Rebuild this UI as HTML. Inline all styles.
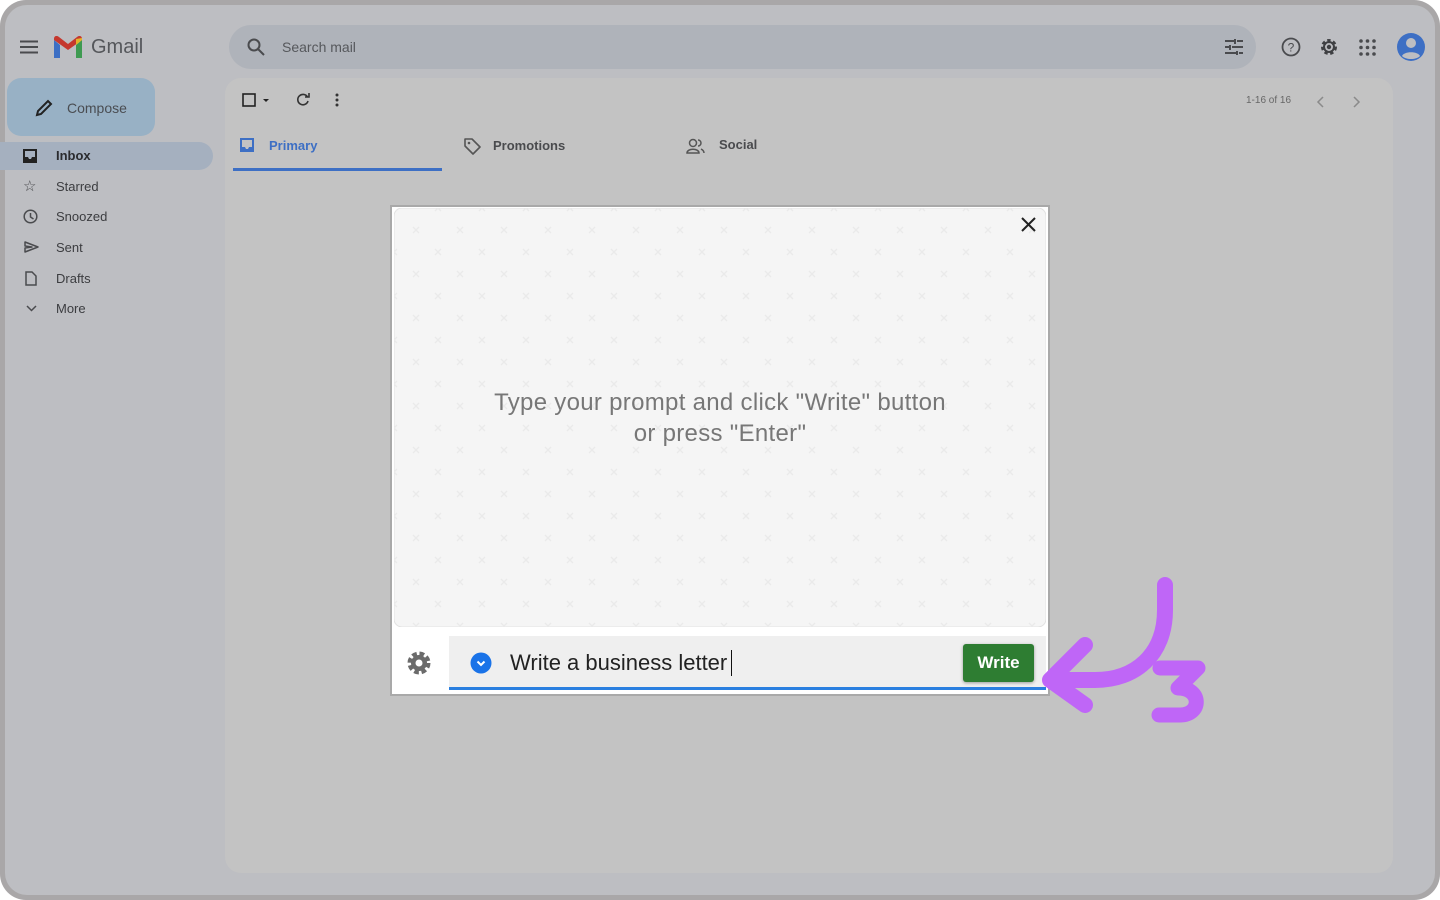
<!DOCTYPE html>
<html><head><style>
*{margin:0;padding:0;box-sizing:border-box}
body{width:1440px;height:900px;overflow:hidden;background:#fff;font-family:"Liberation Sans",Arial,sans-serif;position:relative}
.frame{position:absolute;left:0;top:0;width:1440px;height:900px;background:#a9a7a8;border-radius:26px}
.in{position:absolute;left:5px;top:5px;width:1430px;height:890px;background:#bdbec2;border-radius:22px;overflow:hidden}
.abs{position:absolute}
.t{position:absolute;font-size:13px;color:#3c3d40;white-space:nowrap}
</style></head><body>
<div class="frame"></div>
<div class="in"></div>
<!-- header -->
<svg class="abs" style="left:20px;top:40px" width="18" height="14"><path d="M0 1.5h18M0 7h18M0 12.5h18" stroke="#4a4b4e" stroke-width="2"/></svg>
<svg class="abs" style="left:54px;top:36px" width="28" height="22" viewBox="0 0 28 22">
<path d="M0 4v18h6V9z" fill="#3d6fc4"/><path d="M22 9v13h6V4z" fill="#3e9a51"/>
<path d="M0 4l14 10 14-10v-1.5C28 0 25 -1 23 1L14 8 5 1C3 -1 0 0 0 2.5z" fill="#c5382e"/>
<path d="M22 3l6-1v2l-6 5z" fill="#e2b32b"/></svg>
<div class="t" style="left:91px;top:36px;font-size:20px;color:#55575b">Gmail</div>
<div class="abs" style="left:229px;top:25px;width:1027px;height:44px;background:#afb3ba;border-radius:22px"></div>
<svg class="abs" style="left:247px;top:38px" width="18" height="18"><circle cx="7" cy="7" r="5.5" fill="none" stroke="#4a4b4e" stroke-width="2"/><path d="M11 11l6 6" stroke="#4a4b4e" stroke-width="2"/></svg>
<div class="t" style="left:282px;top:39px;font-size:14px;color:#56585c">Search mail</div>
<svg class="abs" style="left:1225px;top:39px" width="18" height="16"><path d="M0 2h9M12 2h6M0 8h4M7 8h11M0 14h11M14 14h4M10 0v5M5 6v5M12 12v4" stroke="#4a4b4e" stroke-width="2"/></svg>
<svg class="abs" style="left:1281px;top:37px" width="20" height="20"><circle cx="10" cy="10" r="8.5" fill="none" stroke="#4a4b4e" stroke-width="1.8"/><text x="10" y="14.5" font-size="12" text-anchor="middle" fill="#4a4b4e" font-family="Liberation Sans">?</text></svg>
<svg class="abs" style="left:1319px;top:37px" width="20" height="20" viewBox="0 0 20 20"><circle cx="10" cy="10" r="6" fill="none" stroke="#3f4043" stroke-width="4" stroke-dasharray="3 2.3"/><circle cx="10" cy="10" r="5" fill="none" stroke="#3f4043" stroke-width="2"/><circle cx="10" cy="10" r="2.2" fill="#3f4043"/></svg>
<svg class="abs" style="left:1359px;top:39px" width="17" height="17"><g fill="#4a4b4e"><circle cx="2" cy="2" r="1.8"/><circle cx="8.5" cy="2" r="1.8"/><circle cx="15" cy="2" r="1.8"/><circle cx="2" cy="8.5" r="1.8"/><circle cx="8.5" cy="8.5" r="1.8"/><circle cx="15" cy="8.5" r="1.8"/><circle cx="2" cy="15" r="1.8"/><circle cx="8.5" cy="15" r="1.8"/><circle cx="15" cy="15" r="1.8"/></g></svg>
<svg class="abs" style="left:1397px;top:33px" width="28" height="28"><circle cx="14" cy="14" r="14" fill="#3d6fc4"/><circle cx="14" cy="10" r="5" fill="#bdbec2"/><path d="M5 23c2-5 16-5 18 0c-4 4-14 4-18 0z" fill="#bdbec2"/></svg>
<!-- sidebar -->
<div class="abs" style="left:7px;top:78px;width:148px;height:58px;background:#98b1c5;border-radius:14px"></div>
<svg class="abs" style="left:35px;top:99px" width="18" height="18"><path d="M2 16l1-4 10-10 3 3-10 10z" fill="none" stroke="#222" stroke-width="2"/></svg>
<div class="t" style="left:67px;top:100px;font-size:14px;color:#4a4d52">Compose</div>
<div class="abs" style="left:0;top:142px;width:213px;height:28px;background:#a5b0bf;border-radius:0 14px 14px 0"></div>
<svg class="abs" style="left:23px;top:149px" width="14" height="14"><rect x="1" y="1" width="12" height="12" fill="none" stroke="#222" stroke-width="2"/><path d="M1 8h4l1 2h2l1-2h4v5H1z" fill="#222"/></svg>
<div class="t" style="left:56px;top:148px;font-weight:bold;color:#2a2b2e">Inbox</div>
<div class="t" style="left:23px;top:177px;font-size:15px;color:#4a4b4e">☆</div>
<div class="t" style="left:56px;top:179px">Starred</div>
<svg class="abs" style="left:23px;top:209px" width="15" height="15"><circle cx="7.5" cy="7.5" r="6.3" fill="none" stroke="#4a4b4e" stroke-width="1.5"/><path d="M7.5 4v4l3 2" fill="none" stroke="#4a4b4e" stroke-width="1.5"/></svg>
<div class="t" style="left:56px;top:209px">Snoozed</div>
<svg class="abs" style="left:24px;top:241px" width="15" height="12"><path d="M1 1l13 5-13 5 0-4 7-1-7-1z" fill="none" stroke="#4a4b4e" stroke-width="1.5" stroke-linejoin="round"/></svg>
<div class="t" style="left:56px;top:240px">Sent</div>
<svg class="abs" style="left:25px;top:271px" width="12" height="15"><path d="M1 1h6l4 4v9H1z" fill="none" stroke="#4a4b4e" stroke-width="1.5"/></svg>
<div class="t" style="left:56px;top:271px">Drafts</div>
<svg class="abs" style="left:26px;top:305px" width="11" height="8"><path d="M1 1l4.5 4.5L10 1" fill="none" stroke="#4a4b4e" stroke-width="1.5"/></svg>
<div class="t" style="left:56px;top:301px">More</div>
<!-- main -->
<div class="abs" style="left:225px;top:78px;width:1168px;height:795px;background:#c3c3c3;border-radius:16px"></div>
<svg class="abs" style="left:242px;top:93px" width="30" height="14"><rect x="1" y="1" width="12" height="12" fill="none" stroke="#222" stroke-width="1.6"/><path d="M21 6h6l-3 3z" fill="#222"/></svg>
<svg class="abs" style="left:296px;top:93px" width="14" height="14"><path d="M11.5 4A5.2 5.2 0 1 0 12 8" fill="none" stroke="#333" stroke-width="1.6"/><path d="M9 4h4V0" fill="none" stroke="#333" stroke-width="1.6"/></svg>
<svg class="abs" style="left:335px;top:93px" width="4" height="14"><circle cx="2" cy="2" r="1.5" fill="#333"/><circle cx="2" cy="7" r="1.5" fill="#333"/><circle cx="2" cy="12" r="1.5" fill="#333"/></svg>
<div class="t" style="left:1246px;top:95px;font-size:10px;color:#666">1-16 of 16</div>
<svg class="abs" style="left:1316px;top:96px" width="45" height="12"><path d="M7 1L2 6l5 5M38 1l5 5-5 5" fill="none" stroke="#8a8a8a" stroke-width="1.5"/></svg>
<svg class="abs" style="left:240px;top:138px" width="14" height="14"><rect x="1" y="1" width="12" height="12" fill="none" stroke="#3d6fc4" stroke-width="2"/><path d="M1 9h4l1 2h2l1-2h4v4H1z" fill="#3d6fc4"/></svg>
<div class="t" style="left:269px;top:138px;font-weight:bold;color:#3d6fc4">Primary</div>
<div class="abs" style="left:233px;top:168px;width:209px;height:3px;background:#3d6fc4"></div>
<svg class="abs" style="left:463px;top:137px" width="18" height="18"><path d="M2 2h7l8 8-7 7-8-8z" fill="none" stroke="#555" stroke-width="1.6" stroke-linejoin="round"/><circle cx="6" cy="6" r="1.3" fill="#555"/></svg>
<div class="t" style="left:493px;top:138px;font-weight:bold;color:#4a4b4e">Promotions</div>
<svg class="abs" style="left:686px;top:138px" width="20" height="16"><circle cx="7" cy="5" r="3.5" fill="none" stroke="#555" stroke-width="1.5"/><path d="M1 15c0-5 12-5 12 0z" fill="none" stroke="#555" stroke-width="1.5"/><path d="M12 2a3 3 0 0 1 0 6M15 11c2 1 3 2 3 4" fill="none" stroke="#555" stroke-width="1.5"/></svg>
<div class="t" style="left:719px;top:137px;font-weight:bold;color:#4a4b4e">Social</div>
<!-- modal -->
<div class="abs" style="left:390px;top:205px;width:660px;height:491px;background:#a9a9a9"></div>
<div class="abs" style="left:392px;top:207px;width:656px;height:487px;background:#fff"></div>
<svg class="abs" style="left:394px;top:208px" width="652" height="419">
<defs><pattern id="p" width="44" height="44" patternUnits="userSpaceOnUse" x="0" y="0">
<path d="M19 19l6 6M25 19l-6 6M-3 -3l6 6M3 -3l-6 6M41 -3l6 6M47 -3l-6 6M-3 41l6 6M3 41l-6 6M41 41l6 6M47 41l-6 6" stroke="#eaeaea" stroke-width="1.4"/></pattern></defs>
<rect x="0" y="0" width="652" height="419" rx="8" fill="#f5f5f5" stroke="#e2e2e2"/>
<rect x="0" y="0" width="652" height="419" rx="8" fill="url(#p)"/>
</svg>
<svg class="abs" style="left:1021px;top:217px" width="15" height="15"><path d="M1 1l13 13M14 1L1 14" stroke="#222" stroke-width="2"/></svg>
<div class="abs" style="left:394px;top:387px;width:652px;text-align:center;font-size:24px;line-height:31px;color:#777;letter-spacing:0.3px">Type your prompt and click "Write" button<br>or press "Enter"</div>
<svg class="abs" style="left:405px;top:649px" width="28" height="28" viewBox="0 0 28 28"><circle cx="14" cy="14" r="9" fill="none" stroke="#6b6b6b" stroke-width="5" stroke-dasharray="4.5 2.6"/><circle cx="14" cy="14" r="8" fill="#6b6b6b"/><circle cx="14" cy="14" r="3.5" fill="#fff"/></svg>
<div class="abs" style="left:449px;top:636px;width:597px;height:54px;background:#efefef"></div>
<div class="abs" style="left:449px;top:687px;width:597px;height:3px;background:#2a7fe0"></div>
<svg class="abs" style="left:470px;top:652px" width="22" height="22"><circle cx="11" cy="11" r="10.5" fill="#1a73e8"/><path d="M7.5 9.5l3.5 3.5 3.5-3.5" fill="none" stroke="#fff" stroke-width="2"/></svg>
<div class="t" style="left:510px;top:650px;font-size:22px;color:#222">Write a business letter</div>
<div class="abs" style="left:731px;top:650px;width:1px;height:26px;background:#111"></div>
<div class="abs" style="left:963px;top:644px;width:71px;height:38px;background:#2e7d32;border-radius:3px;box-shadow:0 1px 3px rgba(0,0,0,.35);color:#fff;font-weight:bold;font-size:17px;text-align:center;line-height:37px">Write</div>
<!-- arrow -->
<svg class="abs" style="left:1030px;top:570px" width="200" height="170">
<path d="M135 15v25c0 45-30 70-70 70H22M55 75L20 110 55 135" fill="none" stroke="#bf66f7" stroke-width="16" stroke-linecap="round" stroke-linejoin="round"/>
<path d="M130 98H168L148 118C172 118 172 145 150 145H129" fill="none" stroke="#bf66f7" stroke-width="15" stroke-linecap="round" stroke-linejoin="round"/>
</svg>
</body></html>
